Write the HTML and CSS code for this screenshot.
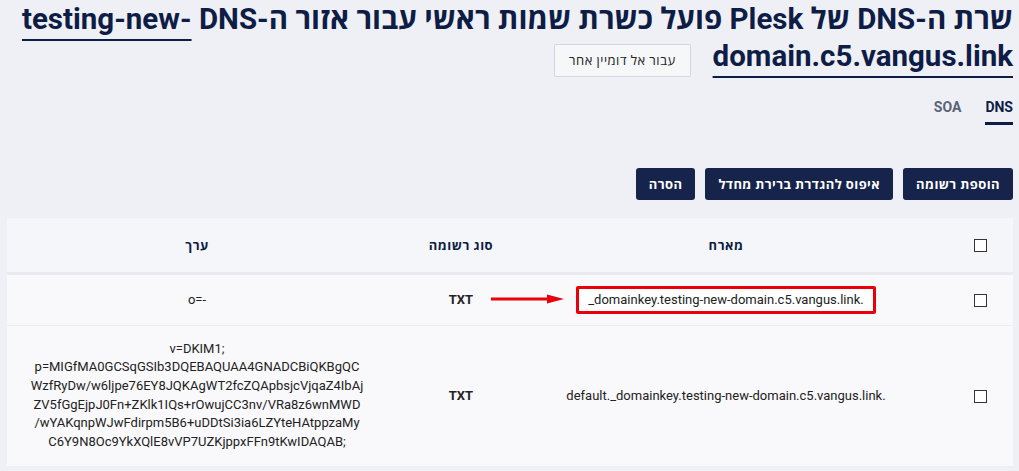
FILE: index.html
```html
<!DOCTYPE html>
<html lang="he" dir="rtl">
<head>
<meta charset="utf-8">
<title>DNS</title>
<link rel="stylesheet" href="styles.css">
</head>
<body>
<div class="page">
  <h1 class="title"><span class="he">שרת ה-DNS של Plesk פועל כשרת שמות ראשי עבור אזור ה-DNS</span> <a class="domain" dir="ltr">testing-new-domain.c5.vangus.link</a><button class="switch">עבור אל דומיין אחר</button></h1>

  <nav class="tabs">
    <span class="tab active">DNS</span>
    <span class="tab">SOA</span>
  </nav>

  <div class="toolbar">
    <button class="btn">הוספת רשומה</button>
    <button class="btn">איפוס להגדרת ברירת מחדל</button>
    <button class="btn">הסרה</button>
  </div>

  <table class="grid">
    <thead>
      <tr>
        <th class="c-check"><span class="check"></span></th>
        <th class="c-host">מארח</th>
        <th class="c-type">סוג רשומה</th>
        <th class="c-value">ערך</th>
      </tr>
    </thead>
    <tbody>
      <tr class="r1">
        <td class="c-check"><span class="check"></span></td>
        <td class="c-host">
          <svg class="arrow" width="74" height="10" viewBox="0 0 74 10"><line x1="0" y1="5" x2="58" y2="5" stroke="#e8000b" stroke-width="3"/><polygon points="56,0.5 73,5 56,9.5" fill="#e8000b"/></svg>
          <span class="mark" dir="ltr">_domainkey.testing-new-domain.c5.vangus.link.</span>
        </td>
        <td class="c-type"><b>TXT</b></td>
        <td class="c-value" dir="ltr">o=-</td>
      </tr>
      <tr class="r2">
        <td class="c-check"><span class="check"></span></td>
        <td class="c-host" dir="ltr">default._domainkey.testing-new-domain.c5.vangus.link.</td>
        <td class="c-type"><b>TXT</b></td>
        <td class="c-value" dir="ltr"><div class="val">v=DKIM1;<br>p=MIGfMA0GCSqGSIb3DQEBAQUAA4GNADCBiQKBgQC<br>WzfRyDw/w6ljpe76EY8JQKAgWT2fcZQApbsjcVjqaZ4IbAj<br>ZV5fGgEjpJ0Fn+ZKlk1IQs+rOwujCC3nv/VRa8z6wnMWD<br>/wYAKqnpWJwFdirpm5B6+uDDtSi3ia6LZYteHAtppzaMy<br>C6Y9N8Oc9YkXQlE8vVP7UZKjppxFFn9tKwIDAQAB;</div></td>
      </tr>
    </tbody>
  </table>
</div>
</body>
</html>
```

FILE: styles.css
```css
html, body {
  margin: 0;
  padding: 0;
}
body {
  background: #eff0f5;
  font-family: Roboto, "Open Sans", "Noto Sans", sans-serif;
  font-size: 13px;
  color: #222;
  width: 1019px;
  height: 471px;
  overflow: hidden;
}
.page {
  padding: 0 6px 0 6px;
}
.title {
  margin: 1px 0 0 0;
  font-size: 29.5px;
  line-height: 37px;
  font-weight: 700;
  color: #0e1d45;
}
.title .he {
  letter-spacing: 0;
}
.domain {
  color: #0e1d45;
  text-decoration: underline;
  text-decoration-thickness: 2px;
  text-underline-offset: 10px;
  text-decoration-skip-ink: none;
}
.switch {
  display: inline-block;
  vertical-align: middle;
  margin-right: 22px;
  margin-top: 4px;
  height: 33px;
  padding: 0 14px;
  background: #f6f7f9;
  border: 1px solid #d3d6dd;
  border-radius: 2px;
  font-family: Roboto, "Open Sans", "Noto Sans", sans-serif;
  font-size: 13px;
  font-weight: 400;
  letter-spacing: 0.5px;
  color: #222;
}
.tabs {
  display: flex;
  gap: 24px;
  margin-top: 16px;
  height: 32px;
}
.tab {
  font-size: 14px;
  font-weight: 700;
  color: #5a6378;
  line-height: 16px;
  padding-top: 6px;
  height: 23px;
  box-sizing: border-box;
}
.tab.active {
  color: #0e1d45;
  border-bottom: 3px solid #0e1d45;
  height: 32px;
}
.toolbar {
  display: flex;
  gap: 10px;
  margin-top: 43px;
}
.btn {
  height: 32px;
  padding: 0 13px;
  background: #16234b;
  color: #fff;
  border: none;
  border-radius: 3px;
  font-family: Roboto, "Open Sans", "Noto Sans", sans-serif;
  font-size: 13px;
  font-weight: 700;
  letter-spacing: 0.4px;
}
.grid {
  margin-top: 18px;
  width: 1006px;
  border-collapse: separate;
  border-spacing: 0;
  table-layout: fixed;
}
.grid th, .grid td {
  text-align: center;
  vertical-align: middle;
  padding: 0;
}
.grid th {
  background: #f5f6f9;
  height: 54px;
  border-bottom: 3px solid #e9ebf0;
  font-weight: 700;
  color: #0e1d45;
  font-size: 13px;
  letter-spacing: 0.5px;
}
.grid td {
  background: #f9f9fb;
  border-bottom: 1px solid #eceef3;
}
.r1 td { height: 50px; }
.r2 td { height: 140px; }
.c-check { width: 66px; }
.c-host { width: 442px; position: relative; }
.c-type { width: 88px; }
.grid .c-value {
  width: 380px;
  padding-right: 30px;
}
.c-type b {
  font-weight: 700;
  color: #222;
}
.check {
  display: inline-block;
  width: 13px;
  height: 13px;
  border: 1.5px solid #333;
  box-sizing: border-box;
  background: #fff;
  vertical-align: middle;
}
.mark {
  display: inline-block;
  border: 3px solid #e8000b;
  border-radius: 2px;
  padding: 3px 9px;
  line-height: 16px;
  background: #fff;
}
.arrow {
  position: absolute;
  left: -14px;
  top: 19px;
}
.val {
  line-height: 18.7px;
  white-space: nowrap;
}
```
